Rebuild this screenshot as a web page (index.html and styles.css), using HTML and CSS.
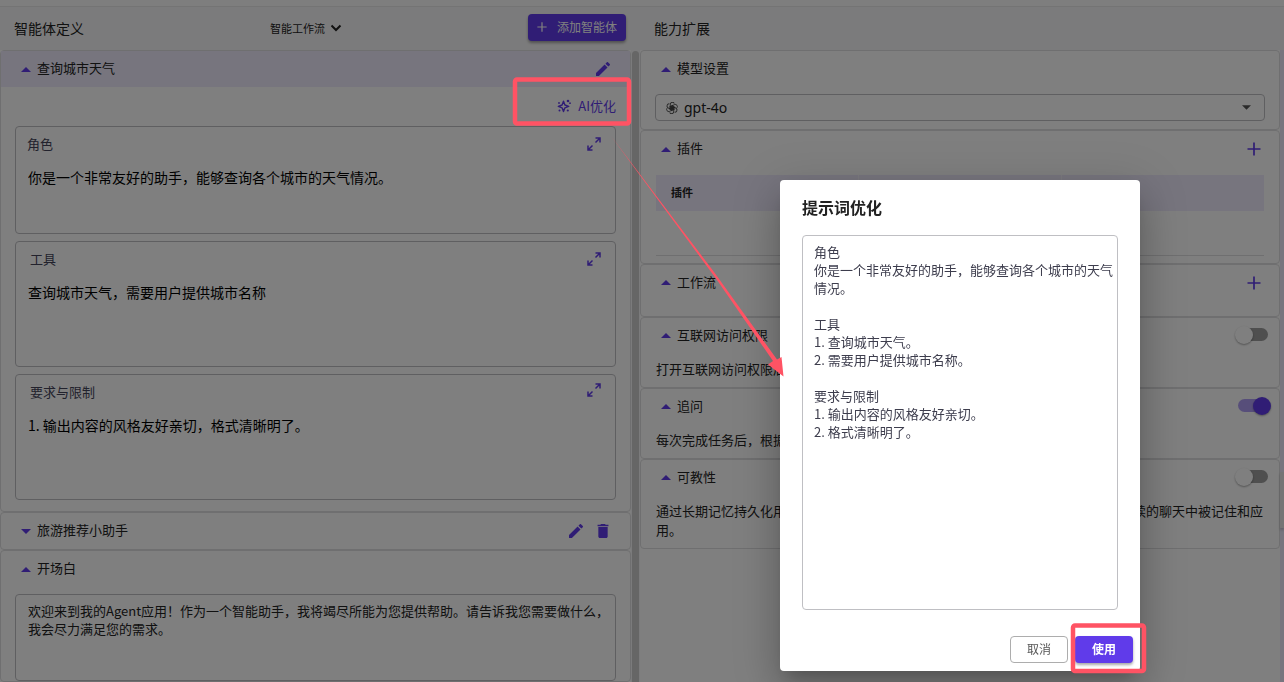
FILE: index.html
```html
<!DOCTYPE html>
<html lang="zh-CN">
<head>
<meta charset="utf-8">
<title>智能体定义</title>
<link rel="stylesheet" href="styles.css">
</head>
<body>
<svg class="defs" aria-hidden="true">
  <symbol id="i-up" viewBox="0 0 10 5"><path d="M0 5 5 0l5 5z"/></symbol>
  <symbol id="i-down" viewBox="0 0 10 5"><path d="M0 0h10L5 5z"/></symbol>
  <symbol id="i-edit" viewBox="3 3 18 18"><path d="M3 17.25V21h3.75L17.81 9.94l-3.75-3.75zM20.71 7.04a1 1 0 0 0 0-1.41l-2.34-2.34a1 1 0 0 0-1.41 0l-1.83 1.83 3.75 3.75z"/></symbol>
  <symbol id="i-trash" viewBox="3 3 18 18"><path d="M6 19c0 1.100.9 2 2 2h8c1.100 0 2-.9 2-2V7H6zM19 4h-3.500l-1-1h-5l-1 1H5v2h14z"/></symbol>
  <symbol id="i-expand" viewBox="0 0 14 14"><path d="M8.500 5.500 12.500 1.500M8.500 1h4.500v4.500M5.500 8.500 1.500 12.500M1 8.500V13h4.500" fill="none" stroke="currentColor" stroke-width="1.500"/></symbol>
  <symbol id="i-plus" viewBox="0 0 14 14"><path d="M7 .5v13M.5 7h13" fill="none" stroke="currentColor" stroke-width="1.700"/></symbol>
  <symbol id="i-spark" viewBox="0 0 14 14"><path d="M6.500 2.200 7.900 6l3.800 1.400L7.900 8.800 6.500 12.600 5.100 8.800 1.300 7.400 5.100 6z" fill="none" stroke="currentColor" stroke-width="1.400" stroke-linejoin="round"/><circle cx="11" cy="2" r="1.300"/><circle cx="13" cy="4.200" r=".9"/><circle cx="2" cy="4" r=".9"/><circle cx="2.500" cy="11.500" r="1"/><circle cx="10.800" cy="11.500" r="1.100"/></symbol>
  <symbol id="i-model" viewBox="0 0 24 24"><g fill="none" stroke="currentColor" stroke-width="1.800"><path id="petal" d="M12 8 17 5.100a4.300 4.300 0 0 1 5 6.500M12 8v7M12 8l4 2.300v5.800"/><use href="#petal" transform="rotate(60 12 12)"/><use href="#petal" transform="rotate(120 12 12)"/><use href="#petal" transform="rotate(180 12 12)"/><use href="#petal" transform="rotate(240 12 12)"/><use href="#petal" transform="rotate(300 12 12)"/></g></symbol>
</svg>

<div class="page">
  <div class="strip"></div>
  <main class="columns">
    <section class="column">
      <header class="bar">
        <h1 class="bar-title">智能体定义</h1>
        <div class="mode">
          <select class="mode-select" aria-label="模式"><option>智能工作流</option></select>
          <svg class="chevron" viewBox="0 0 12 8" aria-hidden="true"><path d="M1.500 1.500 6 6l4.500-4.500"/></svg>
        </div>
        <button class="btn btn-primary btn-add" type="button"><svg class="add-icon"><use href="#i-plus"/></svg>添加智能体</button>
      </header>
      <div class="scroller">
        <div class="cards">
          <article class="card">
            <div class="head head-active">
              <svg class="tri"><use href="#i-up"/></svg><h2 class="name">查询城市天气</h2>
              <button class="icon-btn" type="button" aria-label="编辑"><svg class="icon"><use href="#i-edit"/></svg></button>
            </div>
            <div class="ai-row"><button class="ai-btn" type="button"><svg class="icon"><use href="#i-spark"/></svg>AI优化</button></div>
            <div class="prompts">
              <div class="prompt prompt-first">
                <div class="prompt-head"><label for="role">角色</label><button class="icon-btn" type="button" aria-label="展开角色"><svg class="icon"><use href="#i-expand"/></svg></button></div>
                <textarea id="role" rows="2">你是一个非常友好的助手，能够查询各个城市的天气情况。</textarea>
              </div>
              <div class="prompt">
                <div class="prompt-head"><label for="tools">工具</label><button class="icon-btn" type="button" aria-label="展开工具"><svg class="icon"><use href="#i-expand"/></svg></button></div>
                <textarea id="tools" rows="3">查询城市天气，需要用户提供城市名称</textarea>
              </div>
              <div class="prompt">
                <div class="prompt-head prompt-head-high"><label for="limits">要求与限制</label><button class="icon-btn" type="button" aria-label="展开要求与限制"><svg class="icon"><use href="#i-expand"/></svg></button></div>
                <textarea id="limits" rows="3">1. 输出内容的风格友好亲切，格式清晰明了。</textarea>
              </div>
            </div>
          </article>
          <article class="card">
            <div class="head">
              <svg class="tri"><use href="#i-down"/></svg><h2 class="name">旅游推荐小助手</h2>
              <button class="icon-btn" type="button" aria-label="编辑"><svg class="icon"><use href="#i-edit"/></svg></button>
              <button class="icon-btn" type="button" aria-label="删除"><svg class="icon"><use href="#i-trash"/></svg></button>
            </div>
          </article>
          <article class="card card-last">
            <div class="head"><svg class="tri"><use href="#i-up"/></svg><h2 class="name"><label for="opening">开场白</label></h2></div>
            <textarea class="opening" id="opening" rows="4">欢迎来到我的Agent应用！作为一个智能助手，我将竭尽所能为您提供帮助。请告诉我您需要做什么，我会尽力满足您的需求。</textarea>
          </article>
        </div>
        <div class="track"></div>
      </div>
    </section>

    <section class="column">
      <header class="bar"><h1 class="bar-title">能力扩展</h1></header>
      <div class="scroller scroller-right">
        <div class="cards">
          <article class="card">
            <div class="head"><svg class="tri"><use href="#i-up"/></svg><h2 class="name"><label for="model">模型设置</label></h2></div>
            <div class="model">
              <svg class="model-icon"><use href="#i-model"/></svg>
              <select id="model" class="model-select"><option>gpt-4o</option></select>
              <svg class="model-arrow"><use href="#i-down"/></svg>
            </div>
          </article>
          <article class="card">
            <div class="head"><svg class="tri"><use href="#i-up"/></svg><h2 class="name">插件</h2><button class="icon-btn" type="button" aria-label="添加插件"><svg class="icon"><use href="#i-plus"/></svg></button></div>
            <table class="plugins">
              <thead><tr><th>插件</th><th></th><th></th></tr></thead>
              <tbody><tr><td></td><td></td><td></td></tr></tbody>
            </table>
          </article>
          <article class="card card-flow">
            <div class="head"><svg class="tri"><use href="#i-up"/></svg><h2 class="name">工作流</h2><button class="icon-btn" type="button" aria-label="添加工作流"><svg class="icon"><use href="#i-plus"/></svg></button></div>
          </article>
          <article class="card">
            <div class="head"><svg class="tri"><use href="#i-up"/></svg><h2 class="name"><label for="web">互联网访问权限</label></h2><input class="switch" id="web" type="checkbox"></div>
            <p class="note">打开互联网访问权限后，智能体可以搜索网络信息。</p>
          </article>
          <article class="card">
            <div class="head"><svg class="tri"><use href="#i-up"/></svg><h2 class="name"><label for="follow">追问</label></h2><input class="switch" id="follow" type="checkbox" checked></div>
            <p class="note">每次完成任务后，根据对话内容提供后续问题建议。</p>
          </article>
          <article class="card">
            <div class="head"><svg class="tri"><use href="#i-up"/></svg><h2 class="name"><label for="teach">可教性</label></h2><input class="switch" id="teach" type="checkbox"></div>
            <p class="note">通过长期记忆持久化用户提供的重要信息，使Agent能够学习用户的偏好，并且在后续的聊天中被记住和应用。</p>
          </article>
        </div>
        <div class="side-tab"></div>
      </div>
    </section>
  </main>
</div>

<div class="backdrop"></div>
<div class="dialog" role="dialog" aria-labelledby="dialog-title">
  <h2 class="dialog-title" id="dialog-title">提示词优化</h2>
  <textarea class="dialog-text" aria-labelledby="dialog-title">角色
你是一个非常友好的助手，能够查询各个城市的天气情况。

工具
1. 查询城市天气。
2. 需要用户提供城市名称。

要求与限制
1. 输出内容的风格友好亲切。
2. 格式清晰明了。</textarea>
  <div class="actions">
    <button class="btn btn-plain" type="button">取消</button>
    <button class="btn btn-primary btn-use" type="button">使用</button>
  </div>
</div>

<svg class="marks" width="1284" height="682" viewBox="0 0 1284 682" aria-hidden="true">
  <g fill="none" stroke="#ff5364" stroke-width="4.500"><rect x="515" y="79.500" width="114" height="44" rx="2"/><rect x="1073" y="625.500" width="71" height="45.500" rx="2"/></g>
  <path d="M611 136 717 280 773 361 768 364.500 783.500 376.500 781.500 357 777 359.500 714 272z" fill="#ff5364"/>
</svg>
</body>
</html>
```
FILE: styles.css
```css
:root {
  --primary: #603bea;
  --line: #dedee0;
  --box: #bfbfc3;
  --tint: #eeebfd;
}

* { box-sizing: border-box; }

body {
  margin: 0;
  overflow: hidden;
  color: #222;
  font: 13px/18px "Noto Sans CJK SC", "Noto Sans", sans-serif;
}

h1, h2, p { margin: 0; font-weight: 400; }
button, select, textarea { font: inherit; color: inherit; }
button { padding: 0; border: 0; background: none; }
svg { display: block; flex: none; fill: currentColor; }
.defs { position: absolute; width: 0; height: 0; }

.page { display: flex; flex-direction: column; height: 100vh; background: #f7f7f8; }
.strip { flex: none; height: 7px; background: #fdfdfd; border-bottom: 1px solid #e8e8e8; }
.columns { flex: 1; display: grid; grid-template-columns: calc(50% - 2px) 1fr; min-height: 0; }
.column { display: flex; flex-direction: column; min-width: 0; min-height: 0; }

.bar {
  flex: none;
  display: flex;
  align-items: center;
  justify-content: space-between;
  height: 43px;
  padding: 0 14px 2px;
}
.bar-title { font-size: 14px; line-height: 20px; }
.mode { display: flex; align-items: center; gap: 5px; font-size: 11px; }
.mode-select { appearance: none; padding: 0; border: 0; background: none; }
.chevron { width: 12px; height: 8px; fill: none; stroke: currentColor; stroke-width: 2; }

.btn {
  display: flex;
  align-items: center;
  justify-content: center;
  height: 27px;
  padding-bottom: 2px;
  border-radius: 4px;
  font-size: 12px;
}
.btn-primary { color: #fff; background: var(--primary); box-shadow: 0 2px 3px rgba(0, 0, 0, .35); }
.btn-add { gap: 10px; width: 98px; }
.add-icon { width: 10px; height: 10px; }

.scroller { flex: 1; display: flex; min-height: 0; overflow: hidden; }
.cards { flex: 1; display: flex; flex-direction: column; min-width: 0; background: #fff; }
.track { flex: none; width: 7px; margin: 1px 1px 0 1px; border-radius: 4px 4px 0 0; background: #ccc; }
.scroller-right { background: var(--tint); }
.side-tab { flex: none; width: 4px; height: 56px; margin-top: 422px; background: #eaeaea; box-shadow: 0 2px 3px rgba(0, 0, 0, .2); }

.card { flex: none; border: 1px solid var(--line); border-radius: 4px; background: #fff; }
.card-last { flex: 1 0 auto; }
.card-flow { padding-bottom: 15px; }

.head { display: flex; align-items: center; gap: 6px; height: 36px; padding: 0 20px; }
.head-active { background: var(--tint); }
.tri { width: 10px; height: 5px; color: var(--primary); }
.name { flex: 1; padding-bottom: 2px; font-size: 13px; }
.icon-btn { color: var(--primary); margin-left: 7px; }
.icon { width: 14px; height: 14px; }
.scroller-right .head { padding-right: 11px; }
.scroller-right .icon-btn { margin-right: 7px; }

.ai-row { display: flex; justify-content: flex-end; height: 39px; padding: 0 14px 2px 0; }
.ai-btn { display: flex; align-items: center; gap: 7px; color: var(--primary); }

.prompts { display: grid; gap: 7px; padding: 0 14px 11px; }
.prompt { padding: 8px 12px 0 14px; border: 1px solid var(--box); border-radius: 4px; }
.prompt-first { padding-left: 11px; }
.prompt-head { display: flex; justify-content: space-between; height: 20px; color: #44445a; }
.prompt-head label { line-height: 18px; }
.prompt-head .icon-btn { align-self: flex-start; margin: 2px 2px 0 0; }
.prompt-head-high .icon-btn { margin-top: 0; }
.prompt textarea {
  display: block;
  width: 100%;
  height: 96px;
  margin: 0 0 0 -2px;
  padding: 12px 0 0;
  border: 0;
  background: none;
  resize: none;
  font-size: 14px;
  line-height: 20px;
  color: #000;
}
.prompt-first textarea { margin-left: 1px; height: 78px; }

.opening {
  display: block;
  width: calc(100% - 28px);
  height: 87px;
  margin: 7px 14px 0;
  padding: 7px 4px 7px 12px;
  border: 1px solid var(--box);
  border-radius: 4px;
  background: none;
  resize: none;
}

.model { display: grid; align-items: center; margin: 7px 14px 8px; }
.model > * { grid-area: 1 / 1; }
.model-icon { width: 12px; height: 12px; margin-left: 11px; color: #444; }
.model-arrow { width: 9px; height: 5px; margin-right: 14px; justify-self: end; color: #555; }
.model-select {
  appearance: none;
  width: 100%;
  height: 27px;
  padding: 0 28px;
  border: 1px solid var(--box);
  border-radius: 4px;
  background: none;
  font: 14px/20px "Noto Sans", sans-serif;
}

.plugins { width: calc(100% - 30px); margin: 8px 15px 7px; border-collapse: collapse; table-layout: fixed; }
.plugins th { height: 36px; padding: 0 0 2px 15px; text-align: left; font-size: 11px; font-weight: 700; background: var(--tint); }
.plugins th + th { border-left: 1px solid #f8f6ff; }
.plugins td { height: 44px; padding: 0; border-bottom: 1px solid var(--line); }

.note { padding: 5px 12px 9px 15px; line-height: 19px; }

.switch {
  appearance: none;
  position: relative;
  width: 30px;
  height: 13px;
  margin: 0 0 2px;
  border-radius: 7px;
  background: #9e9e9e;
}
.switch::before {
  content: "";
  position: absolute;
  top: -2px;
  left: -3px;
  width: 18px;
  height: 18px;
  border-radius: 50%;
  background: #fff;
  box-shadow: 0 1px 2px rgba(0, 0, 0, .35);
}
.switch:checked { background: #af9df4; }
.switch:checked::before { left: 15px; background: var(--primary); }

.backdrop { position: fixed; inset: 0; background: rgba(0, 0, 0, .5); }

.dialog {
  position: absolute;
  top: 180px;
  left: calc(50% + 138px);
  width: 360px;
  padding: 16px 22px 8px;
  border-radius: 4px;
  background: #fff;
  box-shadow: 0 11px 15px -7px rgba(0, 0, 0, .2), 0 24px 38px 3px rgba(0, 0, 0, .14), 0 9px 46px 8px rgba(0, 0, 0, .12);
}
.dialog-title { margin-bottom: 17px; font-size: 16px; line-height: 22px; font-weight: 700; }
.dialog-text {
  display: block;
  width: 100%;
  height: 375px;
  padding: 7px 2px 8px 11px;
  border: 1px solid var(--box);
  border-radius: 4px;
  resize: none;
  color: #3d3d4d;
}
.actions { display: flex; justify-content: flex-end; gap: 7px; margin: 26px -15px 0 0; }
.btn-plain { width: 58px; border: 1px solid #adadad; color: #555; }
.btn-use { width: 58px; font-weight: 700; }

.marks { position: absolute; top: 0; left: 0; pointer-events: none; }
```
